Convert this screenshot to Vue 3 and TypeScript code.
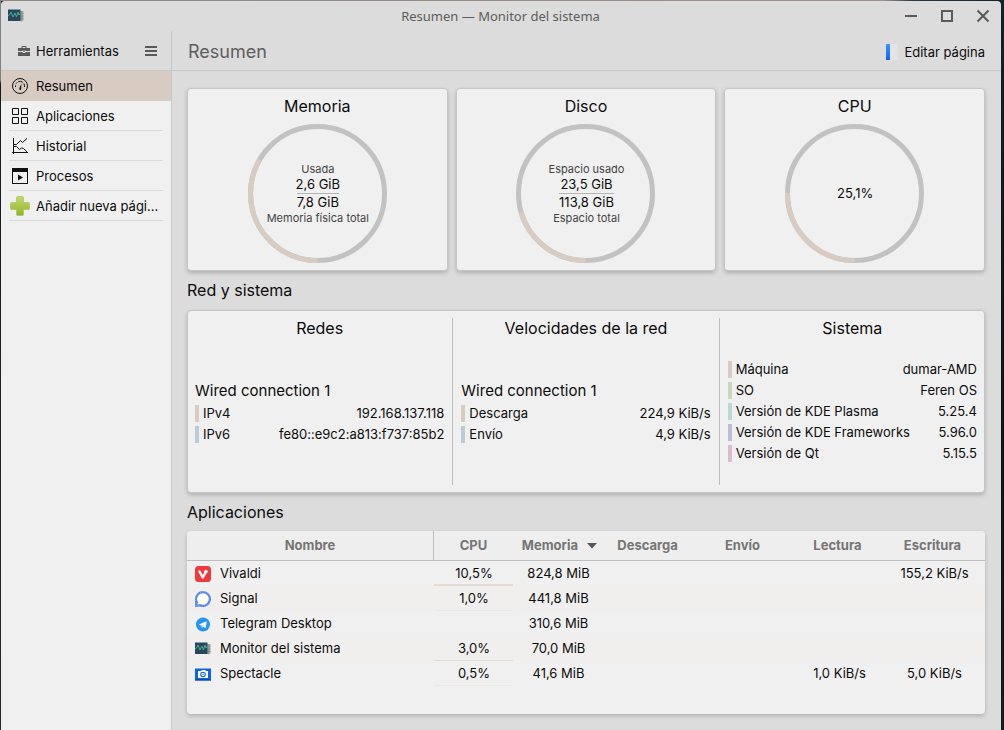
<script setup lang="ts">
import { ref } from 'vue'

type PageIcon = 'gauge' | 'grid' | 'history' | 'process' | 'plus'
interface NavPage { label: string; icon: PageIcon }
interface Gauge { title: string; percent: number; top?: string; used: string; total?: string; bottom?: string }
interface Reading { label: string; value: string; tone: string }
interface Panel { title: string; subtitle?: string; rows: Reading[] }
interface AppRow {
  name: string
  icon: string
  cpu: string
  history?: string
  memory: string
  down: string
  up: string
  read: string
  write: string
}

const pages: NavPage[] = [
  { label: 'Resumen', icon: 'gauge' },
  { label: 'Aplicaciones', icon: 'grid' },
  { label: 'Historial', icon: 'history' },
  { label: 'Procesos', icon: 'process' },
  { label: 'Añadir nueva pági...', icon: 'plus' },
]
const current = ref('Resumen')

const gauges: Gauge[] = [
  { title: 'Memoria', percent: 33.4, top: 'Usada', used: '2,6 GiB', total: '7,8 GiB', bottom: 'Memoria física total' },
  { title: 'Disco', percent: 20.6, top: 'Espacio usado', used: '23,5 GiB', total: '113,8 GiB', bottom: 'Espacio total' },
  { title: 'CPU', percent: 25.1, used: '25,1%' },
]

const panels: Panel[] = [
  {
    title: 'Redes',
    subtitle: 'Wired connection 1',
    rows: [
      { label: 'IPv4', value: '192.168.137.118', tone: 'sand' },
      { label: 'IPv6', value: 'fe80::e9c2:a813:f737:85b2', tone: 'blue' },
    ],
  },
  {
    title: 'Velocidades de la red',
    subtitle: 'Wired connection 1',
    rows: [
      { label: 'Descarga', value: '224,9 KiB/s', tone: 'sand' },
      { label: 'Envío', value: '4,9 KiB/s', tone: 'blue' },
    ],
  },
  {
    title: 'Sistema',
    rows: [
      { label: 'Máquina', value: 'dumar-AMD', tone: 'sand' },
      { label: 'SO', value: 'Feren OS', tone: 'green' },
      { label: 'Versión de KDE Plasma', value: '5.25.4', tone: 'teal' },
      { label: 'Versión de KDE Frameworks', value: '5.96.0', tone: 'violet' },
      { label: 'Versión de Qt', value: '5.15.5', tone: 'pink' },
    ],
  },
]

const apps: AppRow[] = [
  { name: 'Vivaldi', icon: 'vivaldi', cpu: '10,5%', history: 'high', memory: '824,8 MiB', down: '', up: '', read: '', write: '155,2 KiB/s' },
  { name: 'Signal', icon: 'signal', cpu: '1,0%', history: 'low', memory: '441,8 MiB', down: '', up: '', read: '', write: '' },
  { name: 'Telegram Desktop', icon: 'telegram', cpu: '', memory: '310,6 MiB', down: '', up: '', read: '', write: '' },
  { name: 'Monitor del sistema', icon: 'monitor', cpu: '3,0%', history: 'mid', memory: '70,0 MiB', down: '', up: '', read: '', write: '' },
  { name: 'Spectacle', icon: 'spectacle', cpu: '0,5%', history: 'low', memory: '41,6 MiB', down: '', up: '', read: '1,0 KiB/s', write: '5,0 KiB/s' },
]
</script>

<template>
  <div class="desktop">
    <div class="window">
      <header class="titlebar">
        <svg class="app-icon" viewBox="0 0 16 16" aria-hidden="true">
          <path d="M12 3h3.500v9l-1.500 1.500L9 12z" fill="#a3a5a6" />
          <path d="M13.500 3.500v9M12.500 5.500h3M12.500 8h3M12.500 10.500h3" stroke="#7f8283" stroke-width=".6" />
          <path d="M0 1.500h12.500v11.500H0z" fill="#25485a" />
          <path d="M0 8l1.500-1 1.500-3 2 5 2-4 1.500 4 1.500-5 1 3 1.500-2" fill="none" stroke="#4fa596" stroke-width="1" />
        </svg>
        <div class="window-title">Resumen — Monitor del sistema</div>
        <div class="window-buttons">
          <button type="button" aria-label="Minimizar">
            <svg viewBox="0 0 16 16"><path d="M2 8h12" /></svg>
          </button>
          <button type="button" aria-label="Maximizar">
            <svg viewBox="0 0 16 16"><path d="M3 3h10v10H3z" /></svg>
          </button>
          <button type="button" aria-label="Cerrar">
            <svg viewBox="0 0 16 16"><path d="M2.500 2.500l11 11M13.500 2.500l-11 11" /></svg>
          </button>
        </div>
      </header>

      <div class="body">
        <aside class="sidebar">
          <div class="side-tools">
            <button type="button" class="tools-button">
              <svg viewBox="0 0 12 12" aria-hidden="true">
                <path d="M4 3.500V1.500h4v2" fill="none" stroke="#595959" />
                <path d="M0 3h12v3H0zM0 7h12v4H0z" fill="#595959" />
                <path d="M4.500 5.500h3v2.500h-3z" fill="#dcdcdc" />
                <path d="M5.500 5.500h1v1.500h-1z" fill="#595959" />
              </svg>
              Herramientas
            </button>
            <button type="button" class="menu-button" aria-label="Menú">
              <svg viewBox="0 0 12 12" aria-hidden="true"><path d="M0 2h12M0 6h12M0 10h12" stroke="#595959" stroke-width="2" /></svg>
            </button>
          </div>
          <nav class="pages">
            <a
              v-for="page in pages"
              :key="page.label"
              href="#"
              class="page"
              :class="{ active: page.label === current }"
              @click.prevent="current = page.label"
            >
              <svg v-if="page.icon === 'gauge'" class="nav-icon" viewBox="0 0 16 16" fill="none" stroke="#111">
                <circle cx="8" cy="8" r="7.500" />
                <path d="M3.500 9V7.300M4 5.700L5.200 4.400M6.300 3.700Q8.500 2.800 10.700 4.200M11.800 5.500Q12.700 7 12.500 9" />
                <path d="M9.400 5.500L7.300 10.500a1 1 0 0 0 1.900.700z" fill="#111" stroke="none" />
              </svg>
              <svg v-else-if="page.icon === 'grid'" class="nav-icon" viewBox="0 0 16 16" fill="none" stroke="#111">
                <path d="M.5.5h6v6h-6zM9.500.5h6v6h-6zM.5 9.500h6v6h-6zM9.500 9.500h6v6h-6z" />
              </svg>
              <svg v-else-if="page.icon === 'history'" class="nav-icon" viewBox="0 0 16 16" fill="none" stroke="#111">
                <path d="M1.500 0v16M0 14.500h16" />
                <path d="M1.500 6.500h3l4-4 2 2 4.500-4" />
                <path d="M2 8.500h2.500l3 3 2-1.500 2 .500 3.500 3.500" />
              </svg>
              <svg v-else-if="page.icon === 'process'" class="nav-icon" viewBox="0 0 16 16">
                <path d="M0 0h16v16H0zM1 4v11h14V4z" fill="#111" fill-rule="evenodd" />
                <path d="M6 6.500l5 3-5 3z" fill="#111" />
              </svg>
              <svg v-else class="nav-icon plus" viewBox="0 0 20 20">
                <defs>
                  <linearGradient id="plus-fill" x1="0" y1="0" x2="0" y2="1">
                    <stop offset="0" stop-color="#c6d868" />
                    <stop offset="1" stop-color="#8fb52c" />
                  </linearGradient>
                </defs>
                <path d="M7.500.5h5q1 0 1 1v5h5q1 0 1 1v5q0 1-1 1h-5v5q0 1-1 1h-5q-1 0-1-1v-5h-5q-1 0-1-1v-5q0-1 1-1h5v-5q0-1 1-1z" fill="url(#plus-fill)" stroke="#a5bf50" stroke-width=".6" />
              </svg>
              <span class="page-label">{{ page.label }}</span>
            </a>
          </nav>
        </aside>

        <main class="content">
          <div class="toolbar">
            <h1>Resumen</h1>
            <button type="button" class="edit-button">
              <svg viewBox="0 0 16 16" aria-hidden="true">
                <defs>
                  <linearGradient id="edit-blue" x1="0" y1="0" x2="0" y2="1">
                    <stop offset="0" stop-color="#3b93ff" />
                    <stop offset="1" stop-color="#0f63f5" />
                  </linearGradient>
                </defs>
                <path d="M5 0h6.500L13 1.500V16H5z" fill="#e4e4e4" />
                <path d="M1 0h4v16H1z" fill="url(#edit-blue)" />
              </svg>
              Editar página
            </button>
          </div>

          <div class="overview">
            <section class="gauges">
              <article v-for="gauge in gauges" :key="gauge.title" class="card gauge">
                <h2>{{ gauge.title }}</h2>
                <div class="dial">
                  <svg viewBox="0 0 139 139" aria-hidden="true">
                    <g transform="rotate(90 69.500 69.500)" fill="none" stroke-width="5">
                      <circle cx="69.500" cy="69.500" r="67" stroke="#c2c2c2" />
                      <circle cx="69.500" cy="69.500" r="67" stroke="#d8cbc2" pathLength="100" :stroke-dasharray="`${gauge.percent} 100`" />
                    </g>
                  </svg>
                  <div class="dial-text">
                    <span v-if="gauge.top" class="small">{{ gauge.top }}</span>
                    <div class="fraction">
                      <span>{{ gauge.used }}</span>
                      <span v-if="gauge.total" class="total">{{ gauge.total }}</span>
                    </div>
                    <span v-if="gauge.bottom" class="small">{{ gauge.bottom }}</span>
                  </div>
                </div>
              </article>
            </section>

            <h2 class="section-title">Red y sistema</h2>
            <section class="card panels">
              <div v-for="panel in panels" :key="panel.title" class="panel">
                <h3>{{ panel.title }}</h3>
                <div class="panel-body">
                  <div v-if="panel.subtitle" class="subtitle">{{ panel.subtitle }}</div>
                  <div v-for="row in panel.rows" :key="row.label" class="reading" :class="row.tone">
                    <span>{{ row.label }}</span>
                    <span>{{ row.value }}</span>
                  </div>
                </div>
              </div>
            </section>

            <h2 class="section-title apps-title">Aplicaciones</h2>
            <section class="card apps">
              <table>
                <colgroup>
                  <col />
                  <col class="col-cpu" />
                  <col class="col-memory" />
                  <col class="col-rate" />
                  <col class="col-rate" />
                  <col class="col-rate" />
                  <col class="col-last" />
                </colgroup>
                <thead>
                  <tr>
                    <th scope="col" class="name-head">Nombre</th>
                    <th scope="col" class="cpu-head">CPU</th>
                    <th scope="col" class="sorted" aria-sort="descending">
                      <span>Memoria<svg viewBox="0 0 10 6" aria-hidden="true"><path d="M0 0h10L5 5.500z" fill="#555" /></svg></span>
                    </th>
                    <th scope="col">Descarga</th>
                    <th scope="col">Envío</th>
                    <th scope="col">Lectura</th>
                    <th scope="col">Escritura</th>
                  </tr>
                </thead>
                <tbody>
                  <tr v-for="app in apps" :key="app.name">
                    <td class="name">
                      <div>
                        <svg v-if="app.icon === 'vivaldi'" viewBox="0 0 16 16">
                          <rect width="16" height="16" rx="3.500" fill="#ee3a3c" />
                          <path d="M4.500 5.500l3.300 6 2.700-5" fill="none" stroke="#fff" stroke-width="2.400" stroke-linecap="round" stroke-linejoin="round" />
                          <circle cx="10.900" cy="5.600" r="1.800" fill="#fff" />
                        </svg>
                        <svg v-else-if="app.icon === 'signal'" viewBox="0 0 16 16">
                          <path d="M8 0A8 8 0 1 1 5 15.400L0 16V8A8 8 0 0 1 8 0z" fill="#5583ee" />
                          <path d="M8 .800A7.200 7.200 0 1 1 4.800 14.500L.800 15.300V8A7.200 7.200 0 0 1 8 .800z" fill="none" stroke="#a8c2fa" stroke-width=".8" stroke-dasharray="1 1.500" />
                          <path d="M8 2.200A5.800 5.800 0 1 1 5 13L2.300 13.700 3 11A5.800 5.800 0 0 1 8 2.200z" fill="#fff" />
                        </svg>
                        <svg v-else-if="app.icon === 'telegram'" viewBox="0 0 16 16">
                          <circle cx="8" cy="8.500" r="7" fill="#2795ed" />
                          <path d="M3.800 8.600l7.900-3.300-1.100 7-2.500-1.700-1.200 1.300-.300-2.200z" fill="#fff" />
                          <path d="M6.600 9.700l3-2.400-2 2.800-.700 1.800z" fill="#9ccaf2" />
                        </svg>
                        <svg v-else-if="app.icon === 'monitor'" viewBox="0 0 16 16">
                          <path d="M12 3h3.500v9l-1.500 1.500L9 12z" fill="#a3a5a6" />
                          <path d="M13.500 3.500v9M12.500 5.500h3M12.500 8h3M12.500 10.500h3" stroke="#7f8283" stroke-width=".6" />
                          <path d="M0 1.500h12.500v11.500H0z" fill="#25485a" />
                          <path d="M0 8l1.500-1 1.500-3 2 5 2-4 1.500 4 1.500-5 1 3 1.500-2" fill="none" stroke="#4fa596" stroke-width="1" />
                        </svg>
                        <svg v-else viewBox="0 0 16 16">
                          <path d="M0 2.500h16v12H0z" fill="#0d63e3" />
                          <path d="M0 13h16v1.500H0z" fill="#084bb8" />
                          <path d="M3 5h3l1-1h3l1 1h2v7H3z" fill="#fff" />
                          <circle cx="8" cy="8.500" r="2.800" fill="#0d63e3" />
                          <circle cx="8" cy="8.500" r="1.700" fill="#fff" />
                          <circle cx="8" cy="8.500" r=".8" fill="#4f93f5" />
                        </svg>
                        {{ app.name }}
                      </div>
                    </td>
                    <td class="cpu" :class="app.history">{{ app.cpu }}</td>
                    <td class="memory">{{ app.memory }}</td>
                    <td>{{ app.down }}</td>
                    <td>{{ app.up }}</td>
                    <td>{{ app.read }}</td>
                    <td>{{ app.write }}</td>
                  </tr>
                </tbody>
              </table>
            </section>
          </div>
        </main>
      </div>
    </div>
  </div>
</template>

<style>
body {
  margin: 0;
}
</style>

<style scoped>
.desktop {
  box-sizing: border-box;
  min-height: 100vh;
  display: flex;
  padding: 1px 3px 0 1px;
  font: 13px/17px Inter, "Noto Sans", sans-serif;
  color: #0c0c0c;
  background:
    linear-gradient(to right, #8d8a88, #a2918b 88%, #26394a 91%, #10222c) top / 100% 1px no-repeat,
    linear-gradient(#7d8383 0 80px, #161a1c 84px, #24292b) left / 1px 100% no-repeat,
    linear-gradient(#10222c, #0c1a20 30%, #0a1417 60%, #101c22);
}
svg {
  display: block;
  flex: none;
}
h1, h2, h3 {
  margin: 0;
  font-weight: 400;
}
button {
  display: flex;
  align-items: center;
  border: 0;
  padding: 0;
  background: none;
  color: inherit;
  font: inherit;
}
.window {
  flex: 1;
  min-width: 0;
  display: flex;
  flex-direction: column;
  background: #dcdcdc;
  border-radius: 4px 4px 0 0;
}
.titlebar {
  display: grid;
  grid-template-columns: 1fr auto 1fr;
  align-items: center;
  height: 30px;
  padding: 0 10px 0 7px;
}
.app-icon {
  width: 16px;
  height: 16px;
}
.window-title {
  padding-left: 2px;
  font-family: "Noto Sans", sans-serif;
  color: #5c5c5c;
}
.window-buttons {
  display: flex;
  justify-content: flex-end;
  gap: 20px;
}
.window-buttons svg {
  width: 16px;
  height: 16px;
  fill: none;
  stroke: #5a5a5a;
  stroke-width: 2;
}
.body {
  flex: 1;
  display: flex;
}
.sidebar {
  width: 170px;
  flex: none;
  display: flex;
  flex-direction: column;
  border-right: 1px solid #c8c8c8;
}
.side-tools {
  box-sizing: border-box;
  height: 40px;
  display: flex;
  align-items: center;
  justify-content: space-between;
  padding: 1px 14px 0 17px;
  border-bottom: 1px solid #c8c8c8;
}
.tools-button {
  gap: 6px;
}
.side-tools svg {
  width: 12px;
  height: 12px;
}
.pages {
  flex: 1;
  background: #f0f0f0;
}
.page {
  box-sizing: border-box;
  height: 30px;
  margin: 0 8px;
  padding: 1px 0 0 3px;
  display: flex;
  align-items: center;
  gap: 8px;
  border-bottom: 1px solid #dadada;
  color: inherit;
  text-decoration: none;
}
.page.active {
  margin: 0;
  padding-left: 11px;
  background: #d8cbc2;
  border-color: #d8cbc2;
}
.page-label {
  line-height: 18px;
  white-space: nowrap;
}
.nav-icon {
  width: 16px;
  height: 16px;
}
.nav-icon.plus {
  width: 20px;
  height: 20px;
  margin: 0 -2px;
}
.content {
  flex: 1;
  min-width: 0;
  display: flex;
  flex-direction: column;
}
.toolbar {
  box-sizing: border-box;
  height: 40px;
  display: flex;
  align-items: center;
  justify-content: space-between;
  padding: 2px 16px 0;
  border-bottom: 1px solid #c8c8c8;
}
h1 {
  font-size: 18px;
  line-height: 24px;
  color: #5e5e5e;
}
.edit-button {
  gap: 3px;
}
.tools-button,
.edit-button {
  line-height: 18px;
}
.edit-button svg {
  width: 16px;
  height: 16px;
}
.overview {
  flex: 1;
  display: grid;
  grid-template-rows: minmax(182px, 1fr) auto minmax(182px, 1fr) auto minmax(182px, 1fr);
  padding: 17px 16px 16px 15px;
}
.card {
  box-sizing: border-box;
  background: #f0f0f0;
  border: 1px solid #c6c6c6;
  border-radius: 4px;
  box-shadow: 0 2px 4px rgba(0, 0, 0, 0.2);
}
.section-title {
  font-size: 16px;
  line-height: 39px;
}
.apps-title {
  line-height: 38px;
}
.gauges {
  display: grid;
  grid-template-columns: repeat(3, 1fr);
  gap: 8px;
  min-height: 0;
}
.gauge {
  display: flex;
  flex-direction: column;
  gap: 8px;
  padding: 7px;
}
.gauge h2,
.panel h3 {
  font-size: 16px;
  line-height: 20px;
  text-align: center;
}
.dial {
  flex: 1;
  min-height: 138px;
  display: grid;
  place-items: center;
}
.dial > * {
  grid-area: 1 / 1;
}
.dial svg {
  width: 139px;
  height: 139px;
}
.dial-text {
  display: flex;
  flex-direction: column;
  align-items: center;
  padding-left: 1px;
}
.small {
  font-size: 11px;
  line-height: 14px;
  color: #444;
}
.fraction {
  display: flex;
  flex-direction: column;
  align-items: center;
}
.total {
  border-top: 1px solid #b5b5b5;
}
.panels {
  display: flex;
  padding: 7px 0;
}
.panel {
  flex: 1;
  display: flex;
  flex-direction: column;
  padding: 0 8px;
}
.panel:first-child {
  padding-left: 7px;
}
.panel:last-child {
  padding-right: 7px;
}
.panel + .panel {
  border-left: 1px solid #bdbdbd;
}
.panel-body {
  flex: 1;
  display: flex;
  flex-direction: column;
  justify-content: center;
  gap: 4px;
}
.subtitle {
  font-size: 15px;
  line-height: 21px;
}
.reading {
  display: flex;
  justify-content: space-between;
  padding-left: 4px;
  border-left: 4px solid;
}
.sand { border-left-color: #d8cbc2; }
.blue { border-left-color: #bccbd8; }
.green { border-left-color: #c4d8bc; }
.teal { border-left-color: #bcd8d2; }
.violet { border-left-color: #bebcd8; }
.pink { border-left-color: #d8bcd2; }
.apps {
  border-width: 0;
  overflow: hidden;
}
table {
  width: 100%;
  table-layout: fixed;
  border-collapse: separate;
  border-spacing: 0;
}
.col-cpu { width: 80px; }
.col-memory { width: 89px; }
.col-rate { width: 95px; }
.col-last { width: 98px; }
th {
  height: 29px;
  padding: 0 4px 0 0;
  border-bottom: 1px solid #bdbdbd;
  background: #eee;
  color: #757575;
  font-weight: 700;
}
.name-head {
  padding: 0;
}
.cpu-head {
  padding: 0;
  border-left: 1px solid #bdbdbd;
}
.sorted {
  padding-right: 5px;
}
.sorted span {
  display: flex;
  align-items: center;
  justify-content: flex-end;
  gap: 9px;
}
.sorted svg {
  width: 10px;
  height: 6px;
}
td {
  box-sizing: border-box;
  height: 25px;
  padding: 0;
  text-align: center;
}
th:last-child {
  padding-right: 7px;
}
td:last-child {
  padding-right: 3px;
}
tbody tr:nth-child(even) {
  background: #f0efed;
}
.name div {
  display: flex;
  align-items: center;
  gap: 9px;
  padding-left: 8px;
}
.name svg {
  width: 16px;
  height: 16px;
}
.cpu {
  padding-left: 1px;
  border-left: 1px solid transparent;
}
.memory {
  padding-left: 2px;
}
.high,
.mid,
.low {
  background: linear-gradient(#e4dad2, #e4dad2) bottom / 100% 1px no-repeat padding-box;
}
.high {
  background-size: 100% 2px;
}
.low {
  background-image: linear-gradient(#ebe8e5, #ebe8e5);
}
</style>
